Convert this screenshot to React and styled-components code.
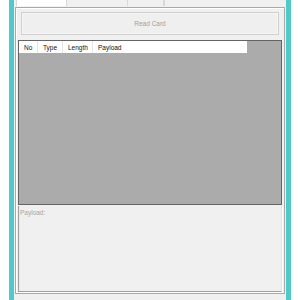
import React from "react";
import styled, { createGlobalStyle } from "styled-components";

const GlobalStyle = createGlobalStyle`
  html, body {
    margin: 0;
    padding: 0;
    background: #ffffff;
  }
  body {
    font-family: "Liberation Sans", Arial, sans-serif;
    font-size: 6.5px;
  }
`;

const Page = styled.div`
  width: 300px;
  height: 300px;
  display: flex;
  padding: 0 9px;
  box-sizing: border-box;
`;

const Frame = styled.div`
  flex: 1;
  display: flex;
  flex-direction: column;
  border-left: 5px solid #4ecbc8;
  border-right: 5px solid #4ecbc8;
  background: #f0f0f0;
  padding: 0 1px 6px 1px;
`;

const TabStrip = styled.div`
  display: flex;
  height: 7px;
  padding-left: 1px;
`;

const Tab = styled.div`
  width: ${(p) => p.$w}px;
  height: 6px;
  box-sizing: border-box;
  background: ${(p) => (p.$active ? "#ffffff" : "#f0f0f0")};
  border-right: 1px solid #d9d9d9;
  border-left: ${(p) => (p.$first ? "1px solid #d9d9d9" : "none")};
`;

const TabPage = styled.div`
  flex: 1;
  display: flex;
  flex-direction: column;
  border: 1px solid #a9a9a9;
  box-shadow: inset 1px 1px 0 #ffffff;
  padding: 4px 2px 1px 2px;
  gap: 5px;
`;

const ReadButton = styled.button`
  margin: 0 3px;
  height: 23px;
  border: 1px solid #cfcfcf;
  background: #efefef;
  box-shadow: inset 0 0 0 1px #f6f6f6;
  color: #a0a0a0;
  font-family: "Liberation Sans", Arial, sans-serif;
  font-size: 6.5px;
  padding: 0;
`;

const ListView = styled.div`
  height: 163px;
  border: 1px solid #646464;
  background: #ababab;
  display: flex;
  flex-direction: column;
`;

const HeaderRow = styled.div`
  display: flex;
  width: 228px;
  height: 12px;
  background: #ffffff;
  align-items: center;
`;

const HeaderCell = styled.div`
  width: ${(p) => p.$w}px;
  height: 100%;
  box-sizing: border-box;
  display: flex;
  align-items: center;
  padding-left: 5px;
  color: #111111;
  border-right: ${(p) => (p.$last ? "none" : "1px solid #e5e5e5")};
`;

const PayloadBox = styled.div`
  flex: 1;
  display: flex;
  flex-direction: column;
  margin-top: -4px;
  border-left: 1px solid #a0a0a0;
  border-bottom: 1px solid #a0a0a0;
  border-right: 1px solid #e3e3e3;
  box-shadow: inset 1px 0 0 #e8e8e8, 1px 1px 0 #ffffff;
`;

const PayloadLabel = styled.div`
  color: #a6a6a6;
  padding: 3px 0 0 1px;
`;

export default function App() {
  return (
    <>
      <GlobalStyle />
      <Page>
        <Frame>
          <TabStrip>
            <Tab $active $first $w={51} />
            <Tab $w={61} />
            <Tab $w={36} />
            <Tab $w={0} />
          </TabStrip>
          <TabPage>
            <ReadButton disabled>Read Card</ReadButton>
            <ListView>
              <HeaderRow>
                <HeaderCell $w={19}>No</HeaderCell>
                <HeaderCell $w={25}>Type</HeaderCell>
                <HeaderCell $w={30}>Length</HeaderCell>
                <HeaderCell $w={154} $last>
                  Payload
                </HeaderCell>
              </HeaderRow>
            </ListView>
            <PayloadBox>
              <PayloadLabel>Payload:</PayloadLabel>
            </PayloadBox>
          </TabPage>
        </Frame>
      </Page>
    </>
  );
}
